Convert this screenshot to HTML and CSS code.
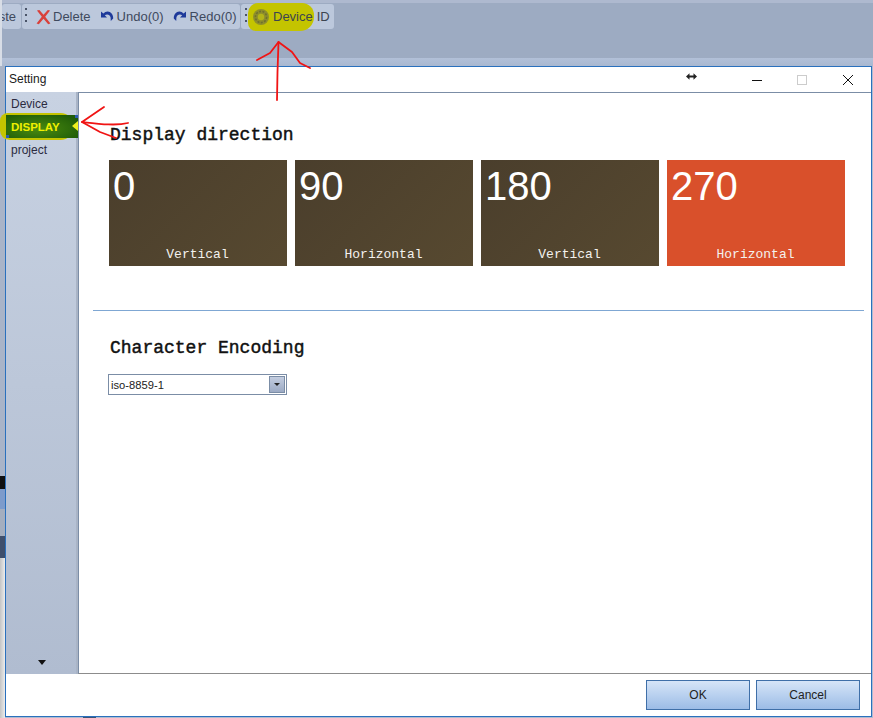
FILE: index.html
```html
<!DOCTYPE html>
<html lang="en">
<head>
<meta charset="utf-8">
<title>Setting</title>
<link rel="stylesheet" href="styles.css">
</head>
<body>
<div class="backdrop">
  <div class="toolbar">
    <div class="tool-group group-first"><span class="tool-text">ste</span></div>
    <div class="tool-group group-edit">
      <span class="grip"></span>
      <span class="tool tool-delete">
        <svg class="icon" viewBox="0 0 16 16"><path d="M1 1 L3.6 0.6 L8 5.6 L12.6 0.6 L15 1 L9.8 7.6 L15.4 14.8 L13 15.6 L8 9.8 L3 15.6 L0.6 14.8 L6.2 7.6 Z" fill="#d9403a"/></svg>
        <span class="tool-text">Delete</span>
      </span>
      <span class="tool">
        <svg class="icon icon-small" viewBox="0 0 14 14"><path d="M1 1.5 V7.5 H7 L4.8 5.3 C7 3.6 10 4.6 10.6 7.4 L10.8 11 L13.2 8.4 C13.4 4.2 10.5 1.2 7.5 1.4 C6 1.5 4.6 2.2 3.4 3.6 Z" fill="#1f3a9a"/></svg>
        <span class="tool-text">Undo(0)</span>
      </span>
      <span class="tool">
        <svg class="icon icon-small" viewBox="0 0 14 14"><path d="M13 1.5 V7.5 H7 L9.2 5.3 C7 3.6 4 4.6 3.4 7.4 L3.2 11 L0.8 8.4 C0.6 4.2 3.5 1.2 6.5 1.4 C8 1.5 9.4 2.2 10.6 3.6 Z" fill="#1f3a9a"/></svg>
        <span class="tool-text">Redo(0)</span>
      </span>
    </div>
    <div class="tool-group group-device">
      <span class="grip"></span>
      <span class="tool tool-device">
        <svg class="icon icon-gear" viewBox="0 0 18 18"><circle cx="9" cy="9" r="8" fill="#8f8f2a"/><circle cx="9" cy="9" r="5.6" fill="none" stroke="#6f7030" stroke-width="1.6" stroke-dasharray="2 1.4"/><circle cx="9" cy="9" r="3.2" fill="#b4b418"/></svg>
        <span class="tool-text">Device</span>
      </span>
      <span class="tool-text tool-id">ID</span>
    </div>
  </div>

  <div class="edge edge-light"></div>
  <div class="edge edge-a"></div>
  <div class="edge edge-b"></div>
  <div class="edge edge-c"></div>
  <div class="edge edge-d"></div>
  <div class="edge edge-e"></div>
  <div class="edge edge-f"></div>
  <div class="peek"></div>
</div>

<section class="window">
  <header class="titlebar">
    <span class="title">Setting</span>
    <span class="resize-glyph">
      <svg viewBox="0 0 11 7" width="11" height="7"><path d="M0 3.5 L3.5 0.2 V2.6 H7.5 V0.2 L11 3.5 L7.5 6.8 V4.4 H3.5 V6.8 Z" fill="#222"/></svg>
    </span>
    <span class="win-btn">
      <svg viewBox="0 0 12 12" width="12" height="12"><path d="M1 6.5 H11" stroke="#111" stroke-width="1"/></svg>
    </span>
    <span class="win-btn">
      <svg viewBox="0 0 12 12" width="12" height="12"><rect x="1.5" y="1.5" width="9" height="9" fill="none" stroke="#ccc" stroke-width="1"/></svg>
    </span>
    <span class="win-btn win-close">
      <svg viewBox="0 0 12 12" width="12" height="12"><path d="M1 1 L11 11 M11 1 L1 11" stroke="#111" stroke-width="1"/></svg>
    </span>
  </header>

  <div class="body">
    <nav class="sidebar">
      <a class="nav-item">Device</a>
      <a class="nav-item nav-active">DISPLAY<span class="nav-notch"></span></a>
      <a class="nav-item">project</a>
      <span class="nav-more"></span>
    </nav>

    <main class="content">
      <h2 class="heading heading-display">Display direction</h2>
      <div class="tiles">
        <div class="tile"><span class="tile-num">0</span><span class="tile-label">Vertical</span></div>
        <div class="tile"><span class="tile-num">90</span><span class="tile-label">Horizontal</span></div>
        <div class="tile"><span class="tile-num">180</span><span class="tile-label">Vertical</span></div>
        <div class="tile tile-active"><span class="tile-num">270</span><span class="tile-label">Horizontal</span></div>
      </div>
      <hr class="divider">
      <h2 class="heading heading-encoding">Character Encoding</h2>
      <div class="combo">
        <span class="combo-value">iso-8859-1</span>
        <span class="combo-btn"></span>
      </div>
    </main>
  </div>

  <footer class="footer">
    <button class="btn" type="button">OK</button>
    <button class="btn" type="button">Cancel</button>
  </footer>
</section>

<svg class="marks" width="873" height="718" viewBox="0 0 873 718">
  <g fill="none" stroke="#f01414" stroke-width="1.8" stroke-linecap="round" stroke-linejoin="round">
    <path d="M277 100 L277.5 72 L278.5 42"/>
    <path d="M257 60 L270 53 L278.5 42 L292 52 L300 63 L310 68"/>
    <path d="M128 123 C116 126 100 124 82 122 L104 107"/>
    <path d="M82 122 L100 132 L116 138"/>
  </g>
</svg>
</body>
</html>
```
FILE: styles.css
```css
* { box-sizing: border-box; }
html, body { margin: 0; padding: 0; }
body {
  width: 873px;
  height: 718px;
  overflow: hidden;
  position: relative;
  background: #e4e4e4;
  font-family: "Liberation Sans", Arial, sans-serif;
}

.backdrop {
  height: 718px;
  padding: 4px 0 0 2px;
  background: linear-gradient(#aeb9cf 0, #aeb9cf 3px, #9dabc2 3px, #9dabc2 58px, #b2c0d8 58px, #a9b8d0 66px, #b0bcd0 67px, #b0bcd0 100%);
  position: relative;
}

.toolbar {
  display: flex;
  align-items: center;
  height: 25px;
  gap: 1px;
}
.tool-group {
  display: flex;
  align-items: center;
  height: 25px;
  background: #bcc8dc;
  border-radius: 3px;
}
.group-first { width: 19px; overflow: hidden; justify-content: flex-end; padding-right: 5px; }
.group-edit { width: 218px; padding-left: 3px; gap: 9px; }
.group-device { width: 93px; padding-left: 4px; position: relative; }
.group-device::before {
  content: "";
  position: absolute;
  left: 7px;
  top: -1px;
  width: 66px;
  height: 28px;
  background: #c4c400;
  border-radius: 10px 12px 14px 8px;
}
.group-device .grip, .group-device .tool, .group-device .tool-id { position: relative; }
.grip {
  width: 2px;
  height: 17px;
  flex: none;
  background: repeating-linear-gradient(#4a5468 0 2px, transparent 2px 6px);
}
.tool { display: inline-flex; align-items: center; gap: 3px; }
.tool-delete { gap: 2px; }
.tool-device { margin-left: 5px; }
.tool-text { font-size: 13px; color: #3f4a5e; white-space: nowrap; }
.group-device .tool-text { color: #3c4450; }
.tool-id { margin-left: 4px; }
.icon { width: 15px; height: 16px; display: block; }
.icon-small { width: 14px; height: 14px; }
.icon-gear { width: 18px; height: 18px; }

.edge { position: absolute; left: 0; width: 5px; }
.edge-light { top: 0; width: 2px; height: 66px; background: #d8dde6; }
.edge-a { top: 66px; height: 410px; background: #a9b4c8; }
.edge-b { top: 476px; height: 13px; background: #101010; }
.edge-c { top: 489px; height: 20px; background: #7d9bcb; }
.edge-d { top: 509px; height: 27px; background: #a4aebf; }
.edge-e { top: 536px; height: 22px; background: #3f4f6c; }
.edge-f { top: 558px; height: 160px; background: linear-gradient(90deg, #c4c4c4, #ececec); }
.peek { position: absolute; left: 83px; top: 716px; width: 13px; height: 2px; background: #3a5478; }

.window {
  position: absolute;
  left: 5px;
  top: 66px;
  width: 867px;
  height: 651px;
  background: #fff;
  border: 1px solid #2a70bd;
  display: flex;
  flex-direction: column;
}
.titlebar {
  display: flex;
  align-items: center;
  height: 25px;
  flex: none;
  padding-left: 3px;
}
.title { font-size: 12px; color: #1a1a1a; flex: 1; margin-top: -2px; }
.resize-glyph { display: flex; width: 11px; margin-right: 54px; margin-top: -6px; }
.win-btn { display: flex; width: 12px; margin-right: 33px; }
.win-close { margin-left: 1px; margin-right: 17px; }

.body {
  flex: 1;
  display: flex;
  min-height: 0;
}
.sidebar {
  width: 72px;
  flex: none;
  background: linear-gradient(#c8d2e2, #b0bcd0);
  border-right: 2px solid #a9b4c6;
  display: flex;
  flex-direction: column;
  position: relative;
  isolation: isolate;
}
.nav-item {
  display: flex;
  align-items: center;
  height: 23px;
  padding-left: 5px;
  font-size: 12px;
  color: #2b2b3f;
  position: relative;
}
.nav-active {
  width: 72px;
  font-size: 11.5px;
  font-weight: bold;
  color: #f0f000;
  background:
    linear-gradient(#2a5cb0, #2a5cb0) top right / 3px 3px no-repeat,
    linear-gradient(#2a5cb0, #2a5cb0) bottom left / 3px 3px no-repeat,
    radial-gradient(ellipse at 45% 60%, #4a8a10, #1f5c08 85%);
}
.nav-active::before {
  content: "";
  position: absolute;
  left: -6px;
  top: -2px;
  width: 74px;
  height: 27px;
  background: #c4c400;
  border-radius: 8px 14px 14px 10px;
  z-index: -1;
}
.nav-notch {
  position: absolute;
  right: 0;
  top: 6px;
  border-style: solid;
  border-width: 5.5px 6px 5.5px 0;
  border-color: transparent #f0f020 transparent transparent;
}
.nav-more {
  position: absolute;
  left: 32px;
  bottom: 9px;
  border-style: solid;
  border-width: 5px 4.5px 0 4.5px;
  border-color: #111 transparent transparent transparent;
}

.content {
  flex: 1;
  min-width: 0;
  background: #fff;
  border-left: 1px solid #7b8da6;
  border-top: 1px solid #7b8da6;
  border-bottom: 1px solid #8c8c8c;
  padding: 30px 0 0 14px;
}
.heading {
  margin: 0 0 0 17px;
  font-family: "Liberation Mono", monospace;
  font-size: 18px;
  font-weight: normal;
  -webkit-text-stroke: 0.45px #111;
  line-height: 24px;
  color: #111;
}
.heading-encoding { margin-top: 25px; }
.tiles {
  display: flex;
  gap: 8px;
  margin: 13px 0 0 16px;
}
.tile {
  width: 178px;
  height: 106px;
  background: linear-gradient(135deg, #4a3e2c, #574930);
  color: #fff;
  display: flex;
  flex-direction: column;
  justify-content: space-between;
  padding: 3px 0 4px 4px;
}
.tile-active { background: #d9502b; }
.tile-num { font-size: 40px; line-height: 46px; }
.tile-label {
  font-family: "Liberation Mono", monospace;
  font-size: 13px;
  line-height: 15px;
  text-align: center;
  padding-right: 5px;
  color: #f4f2ee;
}
.divider {
  height: 1px;
  border: 0;
  background: #7fa7d3;
  margin: 44px 7px 0 0;
}
.combo {
  width: 179px;
  height: 21px;
  margin: 14px 0 0 15px;
  background: #fff;
  border: 1px solid #7b8da6;
  display: flex;
  align-items: center;
  justify-content: space-between;
  padding: 0 1px 0 2px;
}
.combo-value { font-size: 11.2px; color: #222; }
.combo-btn {
  width: 16px;
  height: 17px;
  background: linear-gradient(#c3cde0, #9caac4);
  border: 1px solid #7b8da6;
  position: relative;
}
.combo-btn::after {
  content: "";
  position: absolute;
  left: 4px;
  top: 6px;
  border-style: solid;
  border-width: 3px 3px 0 3px;
  border-color: #222 transparent transparent transparent;
}

.footer {
  height: 42px;
  flex: none;
  display: flex;
  justify-content: flex-end;
  align-items: flex-start;
  gap: 6px;
  padding: 6px 11px 0 0;
  background: #fff;
}
.btn {
  width: 104px;
  height: 30px;
  border: 1px solid #3f6fa8;
  background: linear-gradient(#d6e5f8, #9cbce6);
  font-family: "Liberation Sans", Arial, sans-serif;
  font-size: 12px;
  color: #222;
  padding: 0;
}

.marks { position: absolute; left: 0; top: 0; pointer-events: none; }
```
